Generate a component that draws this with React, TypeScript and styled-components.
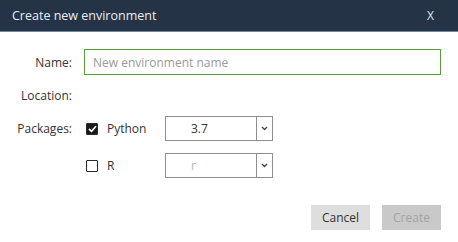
import React from 'react';
import styled, { createGlobalStyle } from 'styled-components';

const GlobalStyle = createGlobalStyle`
  html, body {
    margin: 0;
    padding: 0;
    background: #ffffff;
    font-family: 'Open Sans', 'Noto Sans', Arial, sans-serif;
    font-size: 12px;
    color: #333;
  }
`;

const Dialog = styled.div`
  width: 458px;
  height: 242px;
  background: #fff;
  display: flex;
  flex-direction: column;
`;

const Header = styled.div`
  height: 31px;
  background: #243446;
  border-bottom: 1px solid #71869a;
  display: flex;
  align-items: center;
  justify-content: space-between;
  padding: 0 24px 0 12px;
  color: #e8edf2;
  font-size: 12.5px;
`;

const Close = styled.span`
  font-size: 12px;
  color: #dfe6ec;
`;

const Body = styled.div`
  display: flex;
  flex-direction: column;
  padding: 17px 17px 0 0;
`;

const Row = styled.div<{ $h: number; $mb: number }>`
  display: flex;
  align-items: center;
  height: ${({ $h }) => $h}px;
  margin-bottom: ${({ $mb }) => $mb}px;
`;

const Label = styled.div`
  width: 72px;
  text-align: right;
  color: #333;
  margin-right: 12px;
`;

const NameInput = styled.input`
  flex: 1;
  height: 26px;
  box-sizing: border-box;
  border: 1px solid #5a9e3c;
  outline: none;
  padding: 0 8px;
  font-family: inherit;
  font-size: 12px;
  color: #333;
  caret-color: #222;
  &::placeholder {
    color: #9a9a9a;
  }
`;

const Check = styled.span<{ $on?: boolean }>`
  width: 12px;
  height: 12px;
  box-sizing: border-box;
  margin-left: 2px;
  border: 1.5px solid #2a2a2a;
  border-radius: 1px;
  background: ${({ $on }) => ($on ? '#1a1a1a' : '#fff')};
  display: flex;
  align-items: center;
  justify-content: center;
`;

const PkgName = styled.span`
  width: 58px;
  margin-left: 9px;
  color: #333;
`;

const Select = styled.div<{ $disabled?: boolean }>`
  width: 108px;
  height: 25px;
  box-sizing: border-box;
  border: 1px solid #8e8e8e;
  display: flex;
  align-items: stretch;
  color: ${({ $disabled }) => ($disabled ? '#b8b8b8' : '#333')};
`;

const SelectValue = styled.div`
  flex: 1;
  display: flex;
  align-items: center;
  padding-left: 25px;
`;

const Arrow = styled.div`
  width: 15px;
  border-left: 1px solid #8e8e8e;
  display: flex;
  align-items: center;
  justify-content: center;
`;

const Footer = styled.div`
  display: flex;
  justify-content: flex-end;
  gap: 12px;
  padding-right: 17px;
  margin-top: 2px;
`;

const Button = styled.button<{ $primary?: boolean }>`
  width: 59px;
  height: 25px;
  border: none;
  font-family: inherit;
  font-size: 12px;
  background: ${({ $primary }) => ($primary ? '#c9c9c9' : '#dedede')};
  color: ${({ $primary }) => ($primary ? '#a3a3a3' : '#333')};
  padding: 0;
`;

function Chevron() {
  return (
    <svg width="7" height="5" viewBox="0 0 7 5">
      <path d="M1 1 L3.5 3.5 L6 1" fill="none" stroke="#444" strokeWidth="1.3" />
    </svg>
  );
}

function Tick() {
  return (
    <svg width="9" height="8" viewBox="0 0 9 8">
      <path d="M1 4 L3.5 6.3 L8 1.2" fill="none" stroke="#fff" strokeWidth="1.7" />
    </svg>
  );
}

function App() {
  return (
    <>
      <GlobalStyle />
      <Dialog>
        <Header>
          <span>Create new environment</span>
          <Close>X</Close>
        </Header>
        <Body>
          <Row $h={26} $mb={9}>
            <Label>Name:</Label>
            <NameInput placeholder="New environment name" autoFocus />
          </Row>
          <Row $h={22} $mb={10}>
            <Label>Location:</Label>
          </Row>
          <Row $h={25} $mb={12}>
            <Label>Packages:</Label>
            <Check $on>
              <Tick />
            </Check>
            <PkgName>Python</PkgName>
            <Select>
              <SelectValue>3.7</SelectValue>
              <Arrow>
                <Chevron />
              </Arrow>
            </Select>
          </Row>
          <Row $h={25} $mb={25}>
            <Label />
            <Check />
            <PkgName>R</PkgName>
            <Select $disabled>
              <SelectValue>r</SelectValue>
              <Arrow>
                <Chevron />
              </Arrow>
            </Select>
          </Row>
        </Body>
        <Footer>
          <Button>Cancel</Button>
          <Button $primary>Create</Button>
        </Footer>
      </Dialog>
    </>
  );
}

export default App;
